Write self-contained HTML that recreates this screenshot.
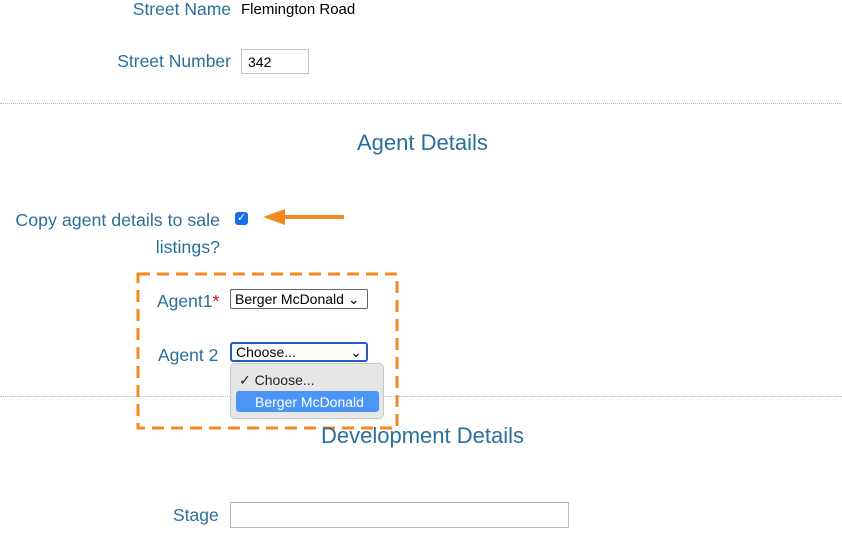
<!DOCTYPE html>
<html><head><meta charset="utf-8"><style>
body{margin:0;width:842px;height:538px;background:#fff;position:relative;overflow:hidden;font-family:"Liberation Sans",Arial,sans-serif}
.a{position:absolute;white-space:nowrap}
.lbl{color:#2a6f9a;font-size:17.5px}
.val{color:#000;font-size:15px}
.hr{position:absolute;left:0;width:842px;border-top:1px dotted #bbb}
.h{color:#2a6f9a;font-size:22px}
</style></head><body>
<div class="a lbl" style="right:611px;top:-1px">Street Name</div>
<div class="a val" style="left:241px;top:1px">Flemington Road</div>
<div class="a lbl" style="right:611px;top:51px">Street Number</div>
<div class="a" style="left:241px;top:49px;width:68px;height:25px;border:1px solid #c4c4c4;box-sizing:border-box;font-size:14px;padding:4px 6px">342</div>
<div class="hr" style="top:103px"></div>
<div class="a h" style="left:357px;top:130px">Agent Details</div>
<div class="a lbl" style="right:622px;top:207px;text-align:right;line-height:27px;font-size:17.8px">Copy agent details to sale<br>listings?</div>
<div class="a" style="left:235px;top:212px;width:13px;height:13px;background:#1a6ee8;border-radius:3px;color:#fff;font-size:11px;line-height:13px;text-align:center">✓</div>
<svg class="a" style="left:258px;top:205px" width="92" height="26"><line x1="86" y1="12" x2="20" y2="12" stroke="#f5891f" stroke-width="4"/><polygon points="5,12 27,4 27,20" fill="#f5891f"/></svg>
<div class="a lbl" style="left:157px;top:291px">Agent1<span style="color:#c0152a">*</span></div>
<div class="a" style="left:230px;top:289px;width:138px;height:20px;border:1px solid #666;box-sizing:border-box;font-size:14px;padding:1px 4px;border-radius:2px">Berger McDonald ⌄</div>
<div class="a lbl" style="left:158px;top:345px">Agent 2</div>
<div class="a" style="left:230px;top:342px;width:138px;height:20px;border:2px solid #1f5fc0;box-sizing:border-box;font-size:14px;padding:0 4px;border-radius:3px">Choose...<span style="position:absolute;right:4px">⌄</span></div>
<div class="hr" style="top:396px"></div>
<div class="a" style="left:230px;top:363px;width:154px;height:56px;background:#e6e6e6;border:1px solid #c8c8c8;border-radius:5px;box-sizing:border-box"></div>
<div class="a" style="left:239px;top:372px;font-size:14px;color:#222">✓ Choose...</div>
<div class="a" style="left:236px;top:391px;width:143px;height:21px;background:#4a95f5;border-radius:3px;color:#fff;font-size:14px;padding:3px 0 0 19px;box-sizing:border-box">Berger McDonald</div>
<svg class="a" style="left:135px;top:271px" width="265" height="160"><rect x="3" y="3" width="259" height="154" fill="none" stroke="#f5891f" stroke-width="3" stroke-dasharray="12,7"/></svg>
<div class="a h" style="left:321px;top:423px">Development Details</div>
<div class="a lbl" style="left:173px;top:505px">Stage</div>
<div class="a" style="left:230px;top:502px;width:339px;height:26px;border:1px solid #b8b8b8;box-sizing:border-box"></div>
</body></html>
